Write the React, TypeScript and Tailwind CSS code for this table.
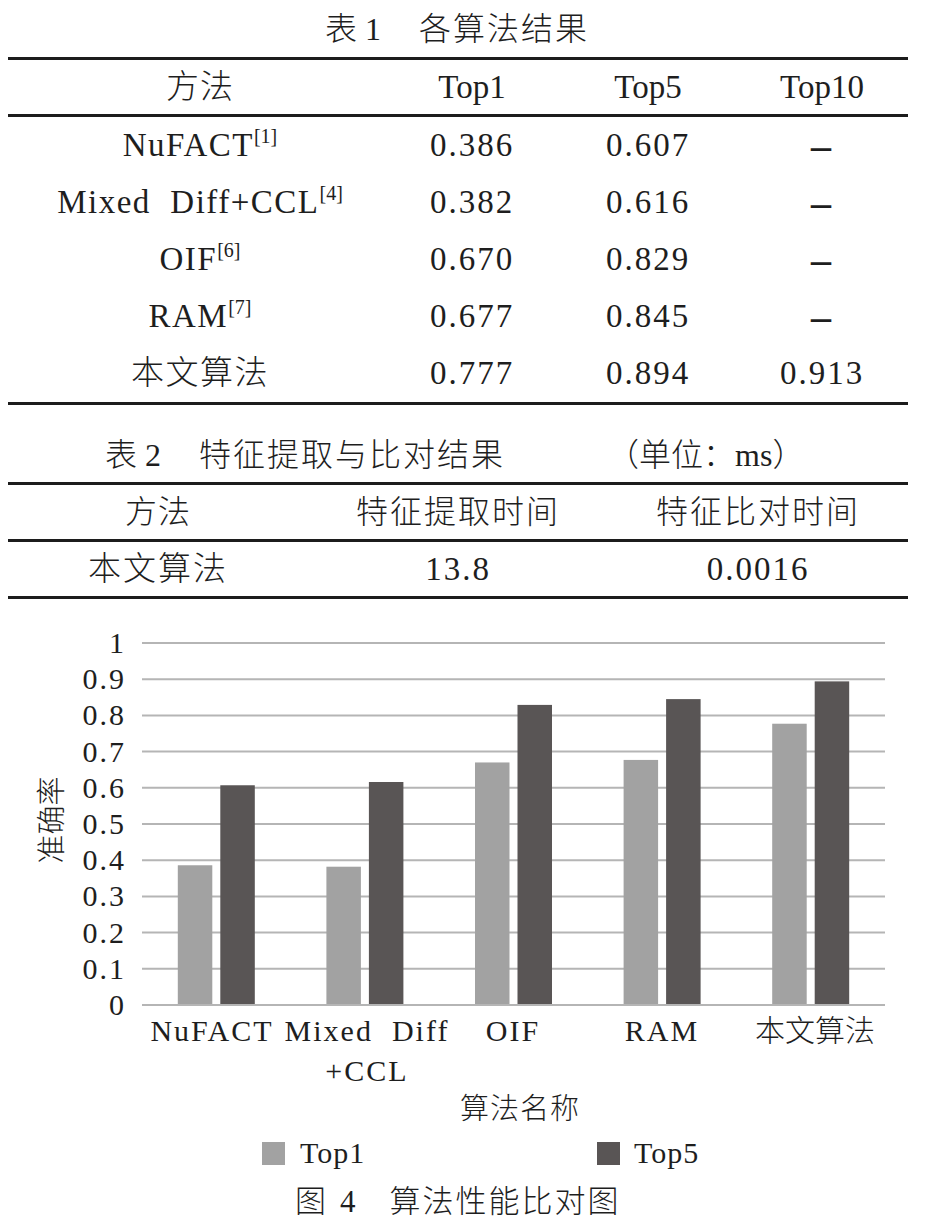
import React from "react";

const F = "[font-family:'Liberation_Serif','Noto_Sans_CJK_SC',serif]";

const t1Rows: { name: string; sup: string; a: string; b: string; c: string }[] = [
  { name: "NuFACT", sup: "[1]", a: "0.386", b: "0.607", c: "–" },
  { name: "Mixed\u00a0\u00a0Diff+CCL", sup: "[4]", a: "0.382", b: "0.616", c: "–" },
  { name: "OIF", sup: "[6]", a: "0.670", b: "0.829", c: "–" },
  { name: "RAM", sup: "[7]", a: "0.677", b: "0.845", c: "–" },
  { name: "本文算法", sup: "", a: "0.777", b: "0.894", c: "0.913" },
];

const top1 = [0.386, 0.382, 0.67, 0.677, 0.777];
const top5 = [0.607, 0.616, 0.829, 0.845, 0.894];

function Chart() {
  const y = (v: number) => 406 - 362 * v;
  const ticks = [1, 0.9, 0.8, 0.7, 0.6, 0.5, 0.4, 0.3, 0.2, 0.1, 0];
  const centers = [0, 1, 2, 3, 4].map((i) => 142 + 148.6 * (i + 0.5));
  return (
    <svg width={936} height={495} viewBox="0 0 936 495" className="block">
      {ticks.map((t) => (
        <line key={t} x1={142} x2={885} y1={y(t)} y2={y(t)} stroke="#b5b5b5" strokeWidth={2} />
      ))}
      {centers.map((c, i) => (
        <g key={i}>
          <rect x={c - 38.5} y={y(top1[i])} width={34.5} height={362 * top1[i]} fill="#a2a2a2" />
          <rect x={c + 4} y={y(top5[i])} width={34.5} height={362 * top5[i]} fill="#595555" />
        </g>
      ))}
      <line x1={142} x2={885} y1={y(0)} y2={y(0)} stroke="#b5b5b5" strokeWidth={2} />
      {ticks.map((t) => (
        <text
          key={"l" + t}
          x={126}
          y={y(t) + 10}
          textAnchor="end"
          fontSize={30}
          letterSpacing={2}
          fill="#1e1e1e"
          fontFamily="'Liberation Serif', serif"
        >
          {t === 1 ? "1" : t === 0 ? "0" : t.toFixed(1)}
        </text>
      ))}
      <text
        x={49}
        y={221}
        transform="rotate(-90 49 221)"
        textAnchor="middle"
        dominantBaseline="central"
        fontSize={29}
        fontWeight={300}
        fill="#1e1e1e"
        fontFamily="'Noto Sans CJK SC', sans-serif"
      >
        准确率
      </text>
      <g fontFamily="'Liberation Serif', 'Noto Sans CJK SC', serif" fontSize={30} fontWeight={300} fill="#1e1e1e" letterSpacing={2}>
        <text x={212} y={442} textAnchor="middle">NuFACT</text>
        <text x={367} y={442} textAnchor="middle">Mixed{"\u00a0\u00a0"}Diff</text>
        <text x={367} y={482} textAnchor="middle">+CCL</text>
        <text x={513} y={442} textAnchor="middle">OIF</text>
        <text x={662} y={442} textAnchor="middle">RAM</text>
        <text x={815} y={442} textAnchor="middle" letterSpacing={0}>本文算法</text>
      </g>
    </svg>
  );
}

export default function App() {
  return (
    <div className={`w-[936px] h-[1231px] bg-white text-[#1e1e1e] font-light ${F} overflow-hidden`}>
      <div className="px-2 w-[916px]">
        {/* Table 1 */}
        <div className="h-[57px] flex items-center pl-[317px] text-[32px] leading-none">
          <span>表</span>
          <span className="ml-[8px]">1</span>
          <span className="ml-[38px] tracking-[2px]">各算法结果</span>
        </div>
        <div className="border-t-[3px] border-[#1c1c1c]" />
        <div className="grid grid-cols-[384px_160px_192px_156px] h-[54px] items-center text-[33px] leading-none">
          <div className="text-center tracking-[1px]">方法</div>
          <div className="text-center">Top1</div>
          <div className="text-center">Top5</div>
          <div className="text-center">Top10</div>
        </div>
        <div className="border-t-[3px] border-[#1c1c1c]" />
        {t1Rows.map((r) => (
          <div
            key={r.name}
            className="grid grid-cols-[384px_160px_192px_156px] h-[57px] items-center text-[33px] leading-none"
          >
            <div className="text-center tracking-[1.5px]">
              {r.name}
              {r.sup && <span className="relative -top-[13px] text-[20px] tracking-normal">{r.sup}</span>}
            </div>
            <div className="text-center tracking-[2px]">{r.a}</div>
            <div className="text-center tracking-[2px]">{r.b}</div>
            <div className={`text-center tracking-[2px] ${r.c === "–" ? "font-bold text-[40px]" : ""}`}>{r.c}</div>
          </div>
        ))}
        <div className="border-t-[3px] border-[#1c1c1c]" />

        {/* Table 2 */}
        <div className="h-[77px] pt-[23px]">
          <div className="h-[54px] flex items-center text-[32px] leading-none pl-[97px]">
            <span>表</span>
            <span className="ml-[8px]">2</span>
            <span className="ml-[38px] tracking-[2px]">特征提取与比对结果</span>
            <span className="ml-[102px]">（单位：ms）</span>
          </div>
        </div>
        <div className="border-t-[3px] border-[#1c1c1c]" />
        <div className="grid grid-cols-[300px_300px_300px] h-[54px] items-center text-[32px] leading-none">
          <div className="text-center tracking-[1px]">方法</div>
          <div className="text-center tracking-[2px]">特征提取时间</div>
          <div className="text-center tracking-[2px]">特征比对时间</div>
        </div>
        <div className="border-t-[3px] border-[#1c1c1c]" />
        <div className="grid grid-cols-[300px_300px_300px] h-[54px] items-center text-[33px] leading-none">
          <div className="text-center tracking-[2px]">本文算法</div>
          <div className="text-center tracking-[2px]">13.8</div>
          <div className="text-center tracking-[2px]">0.0016</div>
        </div>
        <div className="border-t-[3px] border-[#1c1c1c]" />
      </div>

      {/* Chart */}
      <Chart />
      <div className="h-[30px] flex items-center pl-[460px] text-[29px] leading-none tracking-[1px]">算法名称</div>
      <div className="h-[58px] flex items-center text-[30px] leading-none">
        <div className="w-[597px] pl-[262px] flex items-center">
          <div className="w-[23px] h-[23px] bg-[#a2a2a2]" />
          <span className="ml-[15px] tracking-[1px]">Top1</span>
        </div>
        <div className="flex items-center">
          <div className="w-[23px] h-[23px] bg-[#595555]" />
          <span className="ml-[14px] tracking-[1px]">Top5</span>
        </div>
      </div>
      <div className="h-[38px] flex items-center pl-[295px] text-[31px] leading-none">
        <span>图</span>
        <span className="ml-[14px]">4</span>
        <span className="ml-[34px] tracking-[2px]">算法性能比对图</span>
      </div>
    </div>
  );
}
